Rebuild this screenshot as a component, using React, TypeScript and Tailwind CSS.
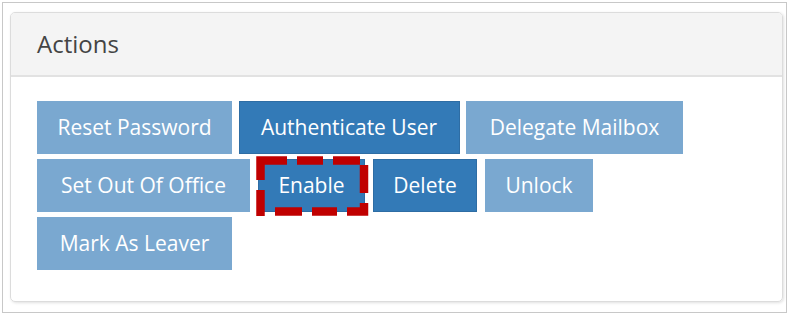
type Action = { label: string; primary: boolean; width: number; highlight?: boolean }

const rows: { gap: string; items: Action[] }[] = [
  {
    gap: "gap-[6.5px]",
    items: [
      { label: "Reset Password", primary: false, width: 195 },
      { label: "Authenticate User", primary: true, width: 221 },
      { label: "Delegate Mailbox", primary: false, width: 217 },
    ],
  },
  {
    gap: "gap-[8px]",
    items: [
      { label: "Set Out Of Office", primary: false, width: 213 },
      { label: "Enable", primary: true, width: 107, highlight: true },
      { label: "Delete", primary: true, width: 104 },
      { label: "Unlock", primary: false, width: 108 },
    ],
  },
  {
    gap: "gap-[8px]",
    items: [{ label: "Mark As Leaver", primary: false, width: 195 }],
  },
]

// hand-drawn looking dashed highlight round the button
const dashes =
  "M10.5 29 V9.5 H37 M47 9.5 H73 M83 9.5 H110 M114 14 V42 M114 52 V60.5 H97 M87 60.5 H62 M52 60.5 H25 M10.5 39 V65"

const ActionButton = ({ label, primary, width, highlight }: Action) => (
  <div className="relative">
    <button
      style={{ width }}
      className={
        "h-[53px] text-[21px] text-white leading-none border " +
        (primary ? "bg-[#337ab7] border-[#2e6da4]" : "bg-[#7aa8d0] border-[#7aa8d0]")
      }
    >
      {label}
    </button>
    {highlight && (
      <svg className="absolute -left-[8px] -top-[8px] pointer-events-none" width="125" height="70" viewBox="0 0 125 70">
        <path d={dashes} fill="none" stroke="#c00000" strokeWidth="8.5" strokeLinejoin="miter" strokeLinecap="butt" />
      </svg>
    )}
  </div>
)

const App = () => {
  return (
    <div className="w-[791px] h-[314px] bg-white p-[2px] font-['Open_Sans',sans-serif]">
      <div className="h-[311px] w-[785px] border border-[#c8c8c8] pt-[9px] pl-[7px]">
        {/* PANEL */}
        <div className="w-[773px] h-[290px] rounded-[5px] border border-[#dcdcdc] shadow-[1px_1px_3px_rgba(0,0,0,0.12)] overflow-hidden">
          <div className="h-[64px] bg-[#f4f4f4] border-b-2 border-[#e2e2e2] flex items-center px-[26px]">
            <h3 className="text-[24px] text-[#444] pb-[1px]">Actions</h3>
          </div>
          <div className="pt-[24px] px-[26px] flex flex-col gap-[5px]">
            {rows.map((row, i) => (
              <div key={i} className={"flex " + row.gap}>
                {row.items.map((a) => (
                  <ActionButton key={a.label} {...a} />
                ))}
              </div>
            ))}
          </div>
        </div>
      </div>
    </div>
  )
}

export default App
